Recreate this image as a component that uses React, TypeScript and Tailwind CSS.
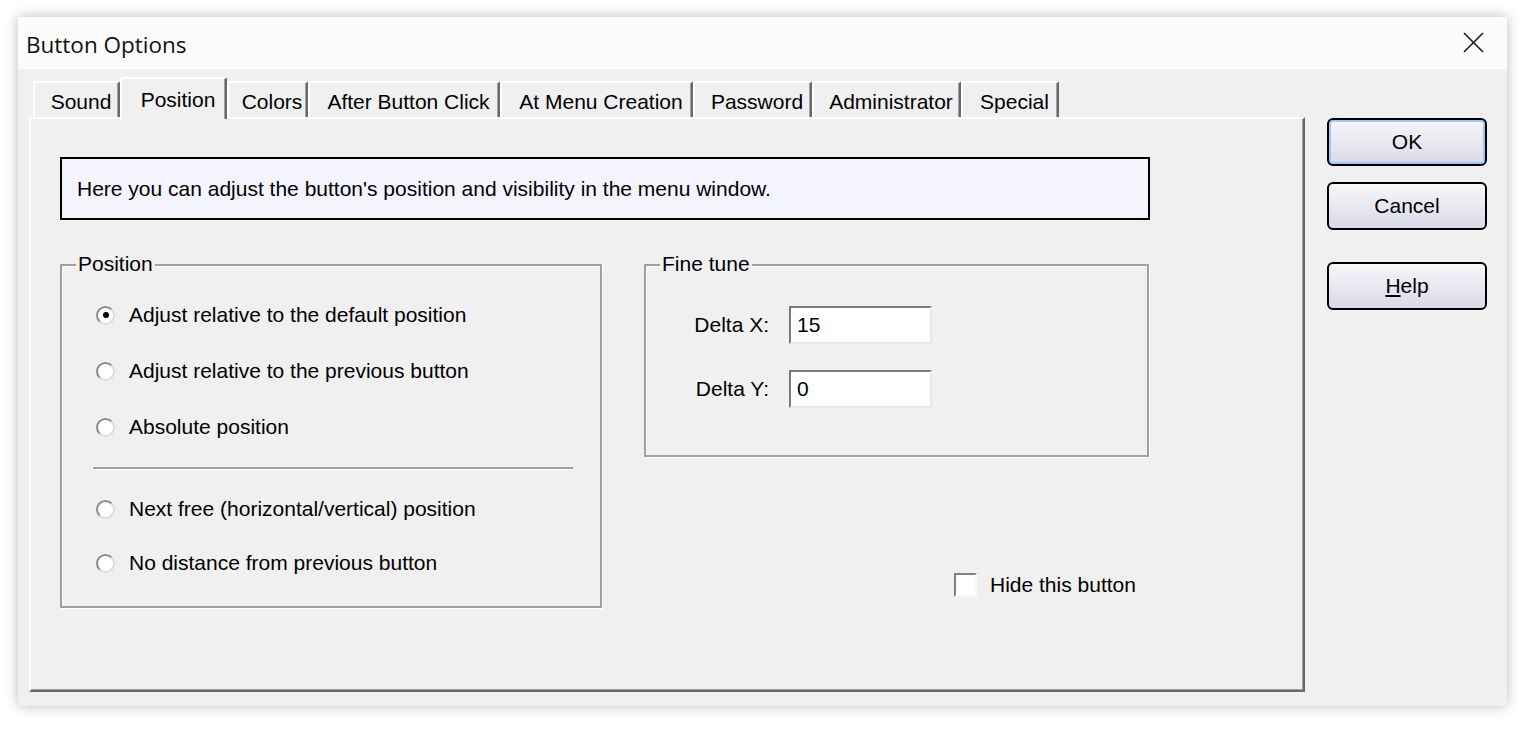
import React from 'react';

const tabs = [
    { label: 'Sound', w: 'w-[87px]' },
    { label: 'Position', w: 'w-[107px]', active: true },
    { label: 'Colors', w: 'w-[81px]' },
    { label: 'After Button Click', w: 'w-[192px]' },
    { label: 'At Menu Creation', w: 'w-[193px]' },
    { label: 'Password', w: 'w-[119px]' },
    { label: 'Administrator', w: 'w-[149px]' },
    { label: 'Special', w: 'w-[98px]' },
];

const radios = [
    { label: 'Adjust relative to the default position', checked: true },
    { label: 'Adjust relative to the previous button' },
    { label: 'Absolute position' },
];

const Radio: React.FC<{ label: string; checked?: boolean }> = ({ label, checked }) => (
    <div className="flex items-center h-[24px] pl-[34px]">
        <div className="w-[19px] h-[19px] rounded-full border-2 border-t-[#8c8c8c] border-l-[#8c8c8c] border-r-[#dcdcdc] border-b-[#dcdcdc] bg-white flex items-center justify-center">
            {checked && <div className="w-[6px] h-[6px] rounded-full bg-black" />}
        </div>
        <span className="ml-[14px]">{label}</span>
    </div>
);

const GroupBox: React.FC<{ label: string; labelLeft: string; className: string; children?: React.ReactNode }> = ({ label, labelLeft, className, children }) => (
    <div className={`relative border-2 border-[#a0a0a0] shadow-[1px_1px_0_#ffffff,inset_1px_1px_0_#ffffff] ${className}`}>
        <span className={`absolute -top-[14px] ${labelLeft} bg-[#f0f0f0] px-[2px] leading-[24px]`}>{label}</span>
        {children}
    </div>
);

const DialogButton: React.FC<{ children: React.ReactNode; focused?: boolean; className?: string }> = ({ children, focused, className = '' }) => (
    <div className={`w-[160px] h-[48px] rounded-[6px] border-2 border-black bg-gradient-to-b from-[#f6f6fa] to-[#dadae8] flex items-center justify-center ${focused ? 'shadow-[inset_0_0_0_2px_#9dc6fb]' : ''} ${className}`}>
        {children}
    </div>
);

const NumberField: React.FC<{ label: string; value: string; className?: string }> = ({ label, value, className = '' }) => (
    <div className={`flex items-center pl-[40px] ${className}`}>
        <span className="w-[83px] text-right">{label}</span>
        <div className="ml-[20px] w-[143px] h-[38px] border-2 border-t-[#7a7a7a] border-l-[#7a7a7a] border-r-[#e6e6e6] border-b-[#e6e6e6] bg-white flex items-center pl-[6px]">
            {value}
        </div>
    </div>
);

export default function App() {
    return (
        <div className="w-[1532px] h-[732px] bg-white pt-[17px] pl-[18px] overflow-hidden">
            <div className="w-[1489px] h-[689px] flex flex-col shadow-[0_0_12px_rgba(0,0,0,0.28)] text-black text-[21px] font-['Liberation_Sans',Arial,sans-serif]">
                {/* Title bar */}
                <div className="h-[52px] bg-[#fbfbfb] flex items-center justify-between pl-[8px] pr-[23px] pt-[3px]">
                    <span className="font-['Open_Sans',sans-serif] text-[22.5px] text-[#111]">Button Options</span>
                    <svg width="21" height="21" viewBox="0 0 21 21" className="-mt-[5px]">
                        <path d="M1 1 L20 20 M20 1 L1 20" stroke="#1a1a1a" strokeWidth="1.6" fill="none" />
                    </svg>
                </div>

                {/* Body */}
                <div className="flex-1 bg-[#f0f0f0] flex pl-[11px] pt-[8px] pb-[14px]">
                    <div className="flex flex-col w-[1276px]">
                        {/* Tabs */}
                        <div className="flex items-end pl-[4px] h-[40px]">
                            {tabs.map((t) =>
                                t.active ? (
                                    <div
                                        key={t.label}
                                        className={`${t.w} h-[42px] -mb-[2px] relative z-10 bg-[#f0f0f0] border-l-2 border-t-2 border-white border-r-2 border-r-[#696969] shadow-[inset_-1px_0_0_#a0a0a0] rounded-tl-[3px] rounded-tr-[2px] flex items-center justify-center pl-[9px] pt-[2px]`}
                                    >
                                        {t.label}
                                    </div>
                                ) : (
                                    <div
                                        key={t.label}
                                        className={`${t.w} h-[36px] bg-[#f0f0f0] border-l-2 border-t-2 border-white border-r-2 border-r-[#696969] shadow-[inset_-1px_0_0_#a0a0a0] rounded-tl-[3px] rounded-tr-[2px] flex items-center justify-center pl-[9px] pt-[3px]`}
                                    >
                                        {t.label}
                                    </div>
                                )
                            )}
                        </div>

                        {/* Panel */}
                        <div className="flex-1 border-l-2 border-t-2 border-white border-r-2 border-b-2 border-r-[#696969] border-b-[#696969] shadow-[inset_-1px_-1px_0_#a0a0a0] pl-[29px] pt-[38px]">
                            <div className="w-[1090px] h-[63px] border-2 border-black bg-[#f4f4fe] flex items-center pl-[15px]">
                                Here you can adjust the button's position and visibility in the menu window.
                            </div>

                            <div className="flex mt-[44px]">
                                <GroupBox label="Position" labelLeft="left-[14px]" className="w-[542px] h-[344px] pt-[37px]">
                                    <div className="flex flex-col gap-[32px]">
                                        {radios.map((r) => (
                                            <Radio key={r.label} label={r.label} checked={r.checked} />
                                        ))}
                                    </div>
                                    <div className="ml-[31px] mt-[28px] w-[480px] h-[2px] bg-[#a0a0a0] shadow-[0_1px_0_#ffffff]" />
                                    <div className="flex flex-col gap-[30px] mt-[28px]">
                                        <Radio label="Next free (horizontal/vertical) position" />
                                        <Radio label="No distance from previous button" />
                                    </div>
                                </GroupBox>

                                <div className="ml-[42px] flex flex-col">
                                    <GroupBox label="Fine tune" labelLeft="left-[14px]" className="w-[505px] h-[193px] pt-[40px]">
                                        <NumberField label="Delta X:" value="15" />
                                        <NumberField label="Delta Y:" value="0" className="mt-[26px]" />
                                    </GroupBox>
                                    <div className="flex items-center mt-[112px] pl-[310px]">
                                        <div className="w-[23px] h-[24px] border-2 border-t-[#808080] border-l-[#808080] border-r-[#f8f8f8] border-b-[#f8f8f8] bg-white" />
                                        <span className="ml-[13px]">Hide this button</span>
                                    </div>
                                </div>
                            </div>
                        </div>
                    </div>

                    {/* Dialog buttons */}
                    <div className="flex flex-col ml-[22px] pt-[41px]">
                        <DialogButton focused>OK</DialogButton>
                        <DialogButton className="mt-[16px]">Cancel</DialogButton>
                        <DialogButton className="mt-[32px]">
                            <span><span className="underline">H</span>elp</span>
                        </DialogButton>
                    </div>
                </div>
            </div>
        </div>
    );
}
